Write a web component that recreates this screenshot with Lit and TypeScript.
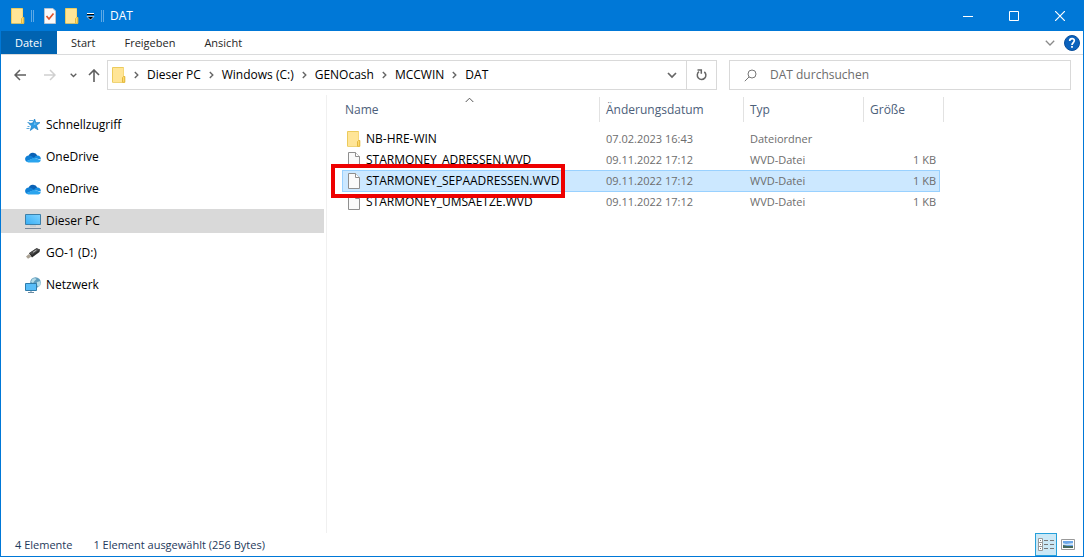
import { LitElement, html, svg, css, nothing, type TemplateResult } from "lit";
import { customElement, state } from "lit/decorators.js";
import { classMap } from "lit/directives/class-map.js";

const folderIcon = html`<svg class="icon" width="14" height="16" viewBox="0 0 14 16" aria-hidden="true">
  <path d="M.5.5h11v9h1.200v5.800H.5z" fill="#ffe48f" stroke="#eccb5c" />
  <path d="M1 1h10.500v8.500l-1 1.500v4H1z" fill="#ffe597" />
  <path d="M10.500 15.300v-4.800l1-1h1.200v5.800z" fill="#ffda6b" stroke="#e3b83f" />
</svg>`;

const fileIcon = html`<svg class="icon" width="14" height="16" viewBox="0 0 14 16" aria-hidden="true">
  <path d="M1.500.5h7l4 4v11h-11z" fill="#fafafa" stroke="#8f8f8f" />
  <path d="M8.500.5v4h4" fill="#fff" stroke="#8f8f8f" />
</svg>`;

const starIcon = html`<svg class="icon" width="16" height="16" viewBox="0 0 16 16" aria-hidden="true">
  <path d="M9.600 2l1.200 3.700 4.200-.1-3.500 2.900 1.500 4.300-3.800-2.200-3.900 2.900 1.300-4.500-2.900-2.500 3.900-.4z" fill="#2d9be3" stroke="#1c80c6" stroke-width=".7" />
  <path d="M9.500 4.400l.7 2.200 2.300.1-3.800 1.600z" fill="#6cc0f4" />
  <path d="M4 3.500h4M2.500 5.500h2M2.500 9.500h2M1.500 11.500h3" stroke="#4b9fd8" stroke-width=".9" />
</svg>`;

const cloudIcon = html`<svg class="icon" width="16" height="16" viewBox="0 0 16 16" aria-hidden="true">
  <path d="M3.500 7.200A4.700 4.700 0 0 1 12.300 6.500L9 9.800z" fill="#0a61b5" />
  <path d="M3.800 6.500a3.500 3.500 0 0 0-2.700 5.900L9.500 9 6.700 7.200a5 5 0 0 0-2.900-.7z" fill="#1080d6" />
  <path d="M12.200 6.400a3.300 3.300 0 0 1 3.500 4L9 9l1.600-2a4 4 0 0 1 1.600-.6z" fill="#168ce0" />
  <path d="M1 12.300L9.300 8.700l6.500 2.500A2.600 2.600 0 0 1 13.400 13.400H3.500A3.300 3.300 0 0 1 1 12.300z" fill="#2aa4ee" />
</svg>`;

const pcIcon = html`<svg class="icon" width="16" height="16" viewBox="0 0 16 16" aria-hidden="true">
  <defs><linearGradient id="screen" x1="0" y1="1" x2="1" y2="0"><stop stop-color="#36aef5" /><stop offset="1" stop-color="#7fd2ff" /></linearGradient></defs>
  <path d="M.5 1.500h15v10H.5z" fill="url(#screen)" stroke="#3d7fa8" />
  <path d="M5 13h6" stroke="#b7c3cc" />
  <path d="M0 15.500h16" stroke="#76879a" />
</svg>`;

const stickIcon = html`<svg class="icon" width="16" height="16" viewBox="0 0 16 16" aria-hidden="true">
  <path d="M4 8.300L11.500 3.200 15 4.500 14.500 7 7 12.500z" fill="#2c2c2c" />
  <path d="M4 8.300l7.500-5.100L15 4.500l-7.700 5.300z" fill="#4c4c4c" />
  <path d="M1 11.500l3-2.400 2.200 2.600L3 13.800z" fill="#aaa294" />
  <path d="M8 7.300l3.500-2.200" stroke="#bbb" />
</svg>`;

const networkIcon = html`<svg class="icon" width="16" height="16" viewBox="0 0 16 16" aria-hidden="true">
  <circle cx="10.500" cy="5.500" r="5.300" fill="#5f9dbd" />
  <path d="M7 2.500c2-2 4-1.500 4.500-.5L9.500 4 8 6 6 5zM12 5l3.500-1v4l-2 2-2-2.500z" fill="#b6dce8" />
  <path d="M.5 6.500h11v7H.5z" fill="#58bdf8" stroke="#2e7cab" />
  <path d="M6 14v1.500M3 15.500h6" stroke="#6a8ba3" />
</svg>`;

const lineIcon = (width: number, height: number, path: string, weight = 1) => html`<svg
  class="icon" width=${width} height=${height} viewBox="0 0 ${width} ${height}" aria-hidden="true">
  ${svg`<path d=${path} fill="none" stroke="currentColor" stroke-width=${weight} />`}
</svg>`;

interface Place { name: string; icon: TemplateResult }
interface Entry { name: string; date: string; type: string; size: string; folder?: boolean; marked?: boolean }

const places: Place[] = [
  { name: "Schnellzugriff", icon: starIcon },
  { name: "OneDrive", icon: cloudIcon },
  { name: "OneDrive", icon: cloudIcon },
  { name: "Dieser PC", icon: pcIcon },
  { name: "GO-1 (D:)", icon: stickIcon },
  { name: "Netzwerk", icon: networkIcon },
];

const entries: Entry[] = [
  { name: "NB-HRE-WIN", date: "07.02.2023 16:43", type: "Dateiordner", size: "", folder: true },
  { name: "STARMONEY_ADRESSEN.WVD", date: "09.11.2022 17:12", type: "WVD-Datei", size: "1 KB" },
  { name: "STARMONEY_SEPAADRESSEN.WVD", date: "09.11.2022 17:12", type: "WVD-Datei", size: "1 KB", marked: true },
  { name: "STARMONEY_UMSAETZE.WVD", date: "09.11.2022 17:12", type: "WVD-Datei", size: "1 KB" },
];

@customElement("title-bar")
class TitleBar extends LitElement {
  static styles = css`
    :host { display: flex; height: 31px; background: #0078d7; color: #fff; align-items: center; }
    .icon { display: block; }
    button { border: 0; padding: 0; background: none; color: inherit; font: inherit; display: flex; align-items: center; justify-content: center; }
    .quick { display: flex; align-items: center; padding-left: 10px; flex: 1; }
    .bar { width: 1px; height: 12px; border: solid #5ea9e6; border-width: 0 1px; margin: 0 8px 0 6px; }
    .check { margin-left: 2px; }
    .new { margin-left: 9px; }
    .more { margin: 3px 0 0 7px; color: #000; }
    .more + .bar { margin: 0 6px; }
    .title { font-size: 12px; }
    .window { display: flex; align-self: stretch; }
    .window button { width: 46px; }
  `;
  render() {
    return html`
      <div class="quick">
        ${folderIcon}<span class="bar"></span>
        <button class="check" aria-label="Eigenschaften">
          <svg class="icon" width="12" height="16" viewBox="0 0 12 16"><path d="M.5.500h8.500l2.500 2.500v12.500H.5z" fill="#fafafa" stroke="#b9c4cf" /><path d="M2.500 8l2.500 3 4.500-5.500" fill="none" stroke="#e0532c" stroke-width="1.700" /></svg>
        </button>
        <button class="new" aria-label="Neuer Ordner">${folderIcon}</button>
        <button class="more" aria-label="Symbolleiste anpassen">
          <svg class="icon" width="9" height="8" viewBox="0 0 9 8"><path d="M1 .5h7" stroke="#fff" /><path d="M1 1.500h7" stroke="#000" /><path d="M1 3.500h7L4.500 7z" fill="#000" stroke="#fff" stroke-width=".6" /></svg>
        </button>
        <span class="bar"></span>
        <span class="title">DAT</span>
      </div>
      <div class="window">
        <button aria-label="Minimieren">${lineIcon(10, 10, "M0 5.500h10")}</button>
        <button aria-label="Maximieren">${lineIcon(10, 10, "M.5.5h9v9h-9z")}</button>
        <button aria-label="Schließen">${lineIcon(10, 10, "M0 0l10 10M10 0L0 10", 1.2)}</button>
      </div>`;
  }
}

@customElement("ribbon-tabs")
class RibbonTabs extends LitElement {
  static styles = css`
    :host { display: flex; height: 23px; border-bottom: 1px solid #dadbdc; align-items: stretch; font-size: 11px; }
    .icon { display: block; }
    button { border: 0; background: none; color: #262626; font: inherit; padding: 0 14px; margin-right: 1px; }
    .file { background: #0063b1; color: #fff; margin-right: 0; padding-right: 15px; }
    .tools { display: flex; margin-left: auto; align-items: center; gap: 9px; padding-right: 3px; }
    .tools button { padding: 0; margin: 0; color: #8a8a8a; }
  `;
  render() {
    return html`
      <button class="file">Datei</button>
      <button>Start</button>
      <button>Freigeben</button>
      <button>Ansicht</button>
      <div class="tools">
        <button aria-label="Menüband erweitern">${lineIcon(10, 6, "M.8.8L5 5 9.200.800", 1.3)}</button>
        <button aria-label="Hilfe">
          <svg class="icon" width="16" height="16" viewBox="0 0 16 16"><circle cx="8" cy="8" r="7.500" fill="#0b62bd" stroke="#0a4f9c" /><path d="M5.700 6c0-3.200 4.800-3.100 4.600-.2C10.200 7.500 8 7.700 8 10" fill="none" stroke="#fff" stroke-width="1.700" /><path d="M7.100 11h1.800v1.800H7.100z" fill="#fff" /></svg>
        </button>
      </div>`;
  }
}

@customElement("address-row")
class AddressRow extends LitElement {
  static styles = css`
    :host { display: flex; padding: 5px 12px 5px 13px; }
    .icon { display: block; flex: none; }
    button { border: 0; background: none; color: inherit; font: inherit; padding: 0; }
    .nav { display: flex; align-items: center; color: #5f5f5f; width: 93px; flex: none; }
    .forward { margin-left: 18px; color: #d0d0d0; }
    .recent { margin-left: 14px; }
    .up { margin-left: 11px; }
    .path, .search { box-sizing: border-box; height: 30px; border: 1px solid #d9d9d9; display: flex; align-items: center; }
    .path { flex: 610 1 610px; color: #000; }
    .crumbs { display: flex; align-items: center; flex: 1; padding-left: 4px; }
    .chevron { color: #666; margin: 0 8px; }
    .drop { color: #666; padding: 0 9px; }
    .reload { color: #666; align-self: stretch; border-left: 1px solid #d9d9d9; padding: 0 9px; }
    .search { flex: 342 1 342px; margin-left: 12px; padding-left: 14px; color: #777; gap: 13px; }
    input { border: 0; outline: 0; padding: 0; flex: 1; min-width: 0; font: inherit; background: none; }
    input::placeholder { color: #6d6d6d; opacity: 1; }
  `;
  render() {
    const chevron = html`<span class="chevron">${lineIcon(5, 8, "M.8 1L3.800 4 .8 7", 1.4)}</span>`;
    const path = ["Dieser PC", "Windows (C:)", "GENOcash", "MCCWIN", "DAT"];
    return html`
      <div class="nav">
        <button aria-label="Zurück">${lineIcon(12, 12, "M12 6H1M6 1L1 6l5 5", 1.5)}</button>
        <button class="forward" aria-label="Vorwärts">${lineIcon(12, 12, "M0 6h11M6 1l5 5-5 5", 1.5)}</button>
        <button class="recent" aria-label="Zuletzt besucht">${lineIcon(7, 5, "M.7.700l2.800 2.800L6.300.700", 1.3)}</button>
        <button class="up" aria-label="Nach oben">${lineIcon(12, 13, "M6 13V1M1 6l5-5 5 5", 1.6)}</button>
      </div>
      <div class="path">
        <div class="crumbs">${folderIcon}${path.map((p) => html`${chevron}<button>${p}</button>`)}</div>
        <button class="drop" aria-label="Vorherige Orte">${lineIcon(10, 7, "M1 1l4 4 4-4", 1.7)}</button>
        <button class="reload" aria-label="Aktualisieren">
          <svg class="icon" width="11" height="12" viewBox="0 0 11 12"><path d="M8.300 2.800A4.300 4.300 0 1 1 3 2.700" fill="none" stroke="currentColor" stroke-width="1.500" /><path d="M1.500 1h3.800v3.800" fill="none" stroke="currentColor" stroke-width="1.500" /></svg>
        </button>
      </div>
      <label class="search">
        <svg class="icon" width="13" height="13" viewBox="0 0 13 13" aria-hidden="true"><circle cx="8" cy="5" r="4" fill="none" stroke="#777" /><path d="M5 8L.8 12.200" stroke="#777" /></svg>
        <input type="search" aria-label="DAT durchsuchen" placeholder="DAT durchsuchen" />
      </label>`;
  }
}

@customElement("place-list")
class PlaceList extends LitElement {
  static styles = css`
    :host { display: block; }
    nav { display: flex; flex-direction: column; gap: 8px; padding-top: 18px; }
    a { display: flex; align-items: center; gap: 5px; height: 24px; padding-left: 24px; color: #000; text-decoration: none; }
    .current { background: #d9d9d9; }
    .icon { display: block; }
  `;
  render() {
    return html`<nav>${places.map((p) => html`
      <a href="#" class=${classMap({ current: p.name === "Dieser PC" })}>${p.icon}${p.name}</a>`)}</nav>`;
  }
}

@customElement("file-table")
class FileTable extends LitElement {
  static styles = css`
    :host { display: block; }
    table { border-spacing: 0; table-layout: fixed; width: 602px; }
    th { height: 25px; padding: 0 6px; font-weight: 400; text-align: left; color: #4c607a; border-right: 1px solid #e2e2e2; box-sizing: border-box; position: relative; }
    th:first-child { padding-left: 3px; }
    .sort { position: absolute; left: 50%; top: 0; margin-left: -6px; color: #555; }
    .icon { display: block; }
    .name { width: 258px; }
    .date { width: 144px; }
    .type { width: 120px; }
    .size { width: 80px; }
    .gap td { height: 6px; }
    td { padding: 0; color: #6d6d6d; position: relative; font-size: 11px; }
    td:last-child { padding-right: 4px; }
    .cell { height: 21px; display: flex; align-items: center; padding: 0 6px; box-sizing: border-box; }
    .title { color: #000; font-size: 12px; gap: 5px; padding-left: 5px; }
    .amount { justify-content: flex-end; padding-right: 4px; }
    .selected .cell { background: #cce8ff; height: 22px; margin-bottom: -1px; border: solid #99d1ff; border-width: 1px 0; }
    .selected .title { border-left-width: 1px; padding-left: 4px; }
    .selected .amount { border-right-width: 1px; padding-right: 3px; }
    .mark { position: absolute; z-index: 1; left: -11px; top: -6px; width: 234px; height: 34px; box-sizing: border-box; border: 4px solid #ee0000; pointer-events: none; }
  `;
  @state() private selected = 2;
  render() {
    return html`<table>
      <thead><tr>
        <th class="name" scope="col">Name<span class="sort">${lineIcon(9, 6, "M.7 5L4.500 1.200 8.300 5", 1)}</span></th>
        <th class="date" scope="col">Änderungsdatum</th>
        <th class="type" scope="col">Typ</th>
        <th class="size" scope="col">Größe</th>
      </tr></thead>
      <tbody>
        <tr class="gap"><td colspan="4"></td></tr>
        ${entries.map((e, i) => html`
          <tr class=${classMap({ selected: i === this.selected })} @click=${() => (this.selected = i)}>
            <td><div class="cell title">${e.folder ? folderIcon : fileIcon}${e.name}</div>${e.marked ? html`<span class="mark"></span>` : nothing}</td>
            <td><div class="cell">${e.date}</div></td>
            <td><div class="cell">${e.type}</div></td>
            <td><div class="cell amount">${e.size}</div></td>
          </tr>`)}
      </tbody>
    </table>`;
  }
}

@customElement("status-bar")
class StatusBar extends LitElement {
  static styles = css`
    :host { display: flex; height: 23px; align-items: center; padding-left: 14px; color: #1e395b; gap: 21px; font-size: 11px; }
    .views { display: flex; margin-left: auto; align-self: stretch; padding-right: 4px; }
    button { border: 0; background: none; padding: 0; width: 22px; display: flex; align-items: center; justify-content: center; }
    .on { background: #cbe8f6; border: 1px solid #26a0da; }
    .icon { display: block; }
  `;
  render() {
    return html`
      <span>4 Elemente</span>
      <span>1 Element ausgewählt (256 Bytes)</span>
      <div class="views">
        <button class="on" aria-label="Details">
          <svg class="icon" width="16" height="13" viewBox="0 0 16 13"><path d="M.5.5h4v12h-4zM.5 4.500h4M.5 8.500h4" fill="#fff" stroke="#999" /><path d="M2 2.500h1M2 6.500h1M2 10.500h1M6 2.500h4M12 2.500h4M6 6.500h4M12 6.500h4M6 10.500h4M12 10.500h4" stroke="#777" /></svg>
        </button>
        <button aria-label="Große Symbole">
          <svg class="icon" width="14" height="11" viewBox="0 0 14 11"><path d="M.5.5h13v10H.5z" fill="#fff" stroke="#999" /><path d="M2 2h10v7H2z" fill="#6da7e8" /><path d="M2 4l3 1 7-1v2H2z" fill="#cfe4f5" /><path d="M2 6l4 1 6 0v2H2z" fill="#44685c" /></svg>
        </button>
      </div>`;
  }
}

@customElement("app-root")
class AppRoot extends LitElement {
  static styles = css`
    :host { display: flex; flex-direction: column; min-height: 100vh; box-sizing: border-box; border: 1px solid #0078d7; border-top: 0; background: #fff; font: 12px/16px "Open Sans", "Noto Sans", sans-serif; }
    main { display: grid; grid-template-columns: 323px 1fr; flex: 1; }
    .list { margin-left: 2px; padding: 2px 0 0 15px; border-left: 1px solid #f0f0f0; }
  `;
  render() {
    return html`
      <title-bar></title-bar>
      <ribbon-tabs></ribbon-tabs>
      <address-row></address-row>
      <main>
        <place-list></place-list>
        <div class="list"><file-table></file-table></div>
      </main>
      <status-bar></status-bar>`;
  }
}
